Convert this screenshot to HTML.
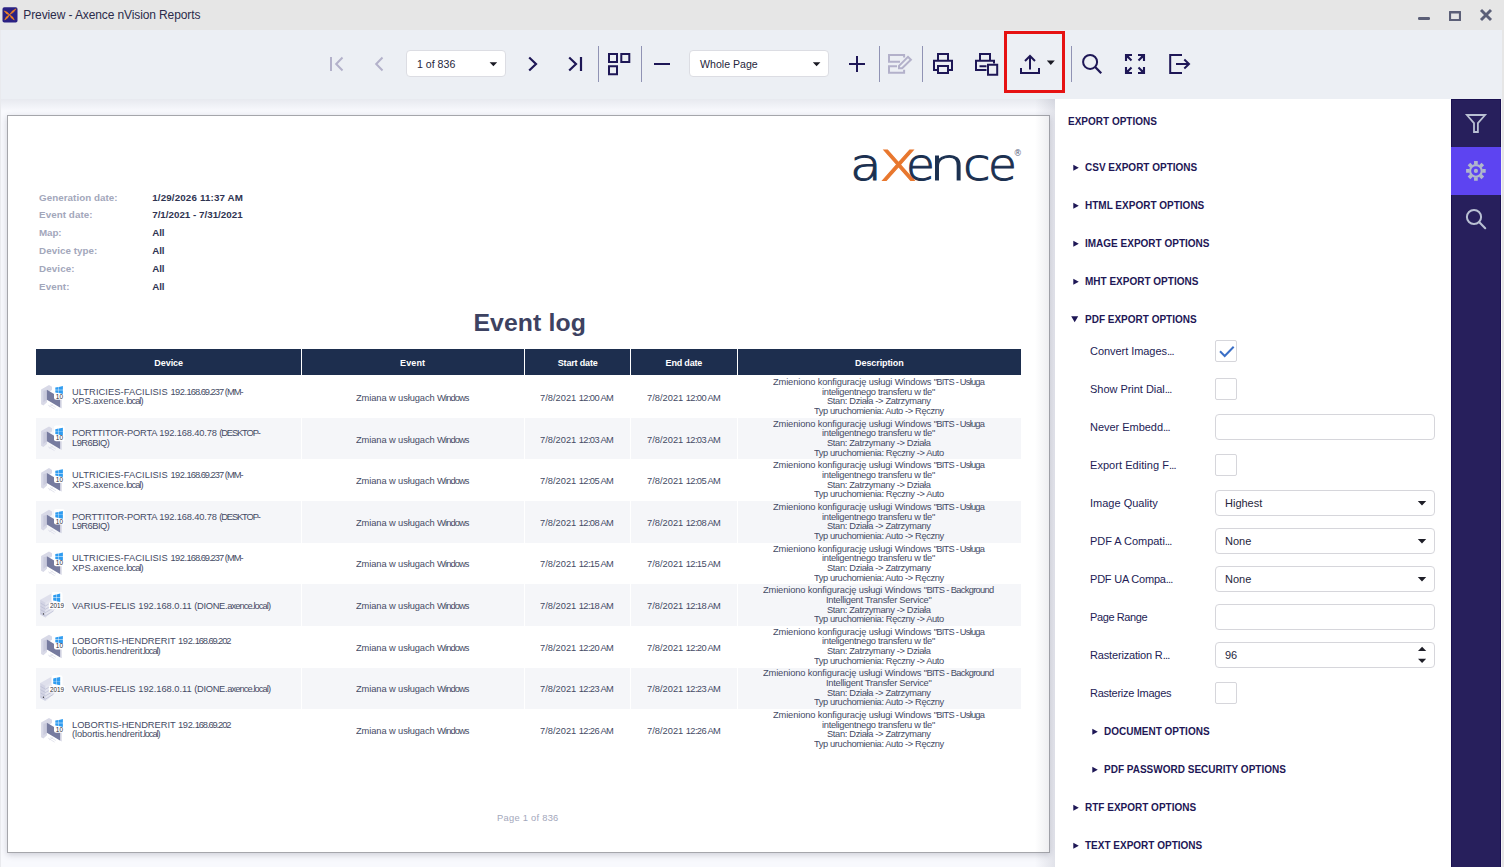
<!DOCTYPE html>
<html lang="en">
<head>
<meta charset="utf-8">
<title>Preview - Axence nVision Reports</title>
<style>
*{box-sizing:border-box;margin:0;padding:0}
html,body{width:1504px;height:867px;overflow:hidden}
body{position:relative;background:#e6e6e6;font-family:"Liberation Sans",sans-serif;color:#1e1756}
.abs{position:absolute}
#titlebar{position:absolute;left:0;top:0;width:1504px;height:30px;background:#e6e6e6}
#title{position:absolute;left:23.300px;top:7.500px;font-size:12px;line-height:15px;color:#2b2b4a;white-space:nowrap;letter-spacing:-0.110px}
#toolbar{position:absolute;left:1px;top:30px;width:1501px;height:69px;background:#eceff4}
#preview{position:absolute;left:1px;top:99px;width:1054px;height:768px;background:#f8f9fd;overflow:hidden}
#tbshadow{position:absolute;left:0;top:0;width:100%;height:12px;background:linear-gradient(#e7e9ef,#f8f9fd)}
#page{position:absolute;left:6px;top:16px;width:1043px;height:738px;background:#fff;border:1px solid #a5a6ab;box-shadow:0 2px 6px rgba(60,60,80,.22)}
#rpshadow{position:absolute;left:1034px;top:0;width:20px;height:768px;background:linear-gradient(90deg,rgba(110,112,135,0),rgba(110,112,135,.17))}
#rpanel{position:absolute;left:1055px;top:99px;width:396px;height:768px;background:#fff}
#sidebar{position:absolute;left:1451px;top:99px;width:50px;height:768px;background:#271f5c;border-left:1px solid #1a1050;border-right:1px solid #1a1050;border-top:1px solid #1a1050}
#sidebar .act{position:absolute;left:-1px;top:47px;width:50px;height:48px;background:#5d44f1}
.combo{position:absolute;background:#fff;border:1px solid #dcdde3;border-radius:4px;font-size:10.6px;color:#26263c;white-space:nowrap}
.sep{position:absolute;top:16px;width:1px;height:36px;background:#9093b4}
.tri{position:absolute;width:0;height:0;border-style:solid}

.sec{position:absolute;font-weight:bold;font-size:10px;line-height:12px;white-space:nowrap;color:#1e1756}
.lbl{position:absolute;left:35px;font-size:11px;line-height:14px;white-space:nowrap;color:#231c55}
.inp{position:absolute;left:160px;width:220px;height:26px;border:1px solid #d6d6db;border-radius:4px;background:#fff;font-size:11px;line-height:25px;padding-left:9px;color:#26263c}
.chk{position:absolute;left:160px;width:22px;height:22px;border:1px solid #d6d6db;border-radius:2px;background:#fff}

#page .t{position:absolute;white-space:nowrap;font-size:9.8px;line-height:12px;color:#454b65}
#page .ml{position:absolute;left:31px;white-space:nowrap;font-size:9.8px;line-height:12px;font-weight:bold;color:#a3a7bb}
#page .mv{position:absolute;left:144px;white-space:nowrap;font-size:9.8px;line-height:12px;font-weight:bold;color:#2f3452}
#page .th{position:absolute;top:233px;height:26px;background:#1d2e4e;color:#fff;font-weight:bold;font-size:9.8px;line-height:27.600px;text-align:center;white-space:nowrap}
#page .alt{position:absolute;left:28px;width:985px;background:#f5f6f9}
#page .vs{position:absolute;top:260px;width:1px;height:377px;background:#fff}
</style>
</head>
<body>
<div id="titlebar">
  <svg class="abs" style="left:2px;top:7px" width="16" height="16" viewBox="0 0 16 16"><rect x="0.5" y="0.2" width="15" height="15.4" rx="1.8" fill="#2a2183"/><path d="M7.47 7.77Q5.84 4.46 2.20 3.90Q3.83 7.21 7.47 7.77ZM7.47 7.77Q11.92 6.05 14.10 1.80Q9.65 3.52 7.47 7.77ZM7.47 7.77Q3.83 9.24 2.70 13.00Q6.34 11.53 7.47 7.77ZM7.47 7.77Q8.64 11.54 12.30 13.00Q11.13 9.23 7.47 7.77Z" fill="#f5841f" stroke="#f5841f" stroke-width="0.5" stroke-linejoin="round"/></svg>
  <div id="title">Preview - Axence nVision Reports</div>
  <svg class="abs" style="left:1414px;top:6px" width="84" height="18" viewBox="0 0 84 18">
    <rect x="4" y="11" width="12" height="3" rx="1.3" fill="#5b5f77"/>
    <path d="M35.500 4.900h11q.5 0 .5.500v9.200q0 .5-.5.500h-11q-.5 0-.5-.5v-9.200q0-.5.500-.5zM37.100 7.600v5.400h7.800v-5.400z" fill="#5b5f77" fill-rule="evenodd"/>
    <path d="M67 4l10 10M77 4l-10 10" stroke="#5b5f77" stroke-width="2.900" stroke-linecap="butt"/>
  </svg>
</div>

<div class="abs" style="left:0;top:30px;width:1px;height:837px;background:#e9eaee"></div>
<div id="toolbar">
  <div class="sep" style="left:597px"></div>
  <div class="sep" style="left:640px"></div>
  <div class="sep" style="left:878px"></div>
  <div class="sep" style="left:921px"></div>
  <div class="sep" style="left:1070px"></div>
  <div class="combo" style="left:405px;top:20px;width:100px;height:27px;line-height:27px;padding-left:10px">1 of 836</div>
  <div class="combo" style="left:688px;top:20px;width:140px;height:27px;line-height:27px;padding-left:10px">Whole Page</div>
  <div class="abs" style="left:1003.4px;top:1.4px;width:61px;height:62.100px;border:3.200px solid #e61212"></div>
</div>
<svg class="abs" style="left:0;top:0" width="1504" height="99" viewBox="0 0 1504 99" fill="none" stroke="#1e1756" stroke-width="2">
  <g fill="#1a1a24" stroke="none"><path d="M489.600 62.200h7.600l-3.800 4zM812.800 62.200h7.600l-3.800 4zM1046.800 60.600h8l-4 4.300z"/></g>
  <!-- first / prev (disabled) -->
  <g stroke="#b3b1ca">
    <path d="M331 57v14M342.5 57.5L336.2 64l6.3 6.5"/>
    <path d="M382.5 57.5L376.2 64l6.3 6.5"/>
  </g>
  <!-- next / last -->
  <path d="M529.2 57.5L536 64l-6.800 6.500" stroke-width="2.200"/>
  <path d="M569.200 57.500L576 64l-6.800 6.500M581 57v14" stroke-width="2.200"/>
  <!-- thumbnails grid -->
  <path d="M609 54h8v8h-8zM621.300 54h8v8h-8zM609 66.300h8v8h-8z"/>
  <!-- minus / plus -->
  <path d="M654 64h16M849 64h16M857 56v16"/>
  <!-- edit (disabled) -->
  <g stroke="#b3b1ca">
    <path d="M904.100 57.500v-2.600h-15.100v6.800h11M904.100 69.700v3h-15.100v-6.400h8"/>
    <path d="M899 68.300v-2.400l9-9 2.900 2.900-8.800 8.500z" stroke-width="2"/>
  </g>
  <!-- print -->
  <path d="M938 60.500v-6.500h10v6.500M938 70h-4v-9.200h18v9.200h-4M938 66h10v7h-10z"/>
  <!-- print page -->
  <path d="M980 60.500v-6.500h10v6.500M986.500 70h-10.500v-9.200h18v2.800M979.500 66.200h7"/>
  <path d="M988 64.800h9.200v9.900h-9.200z"/>
  <!-- export -->
  <path d="M1021 68v5h18v-5M1030 69.500v-13M1025 61l5-5 5 5"/>
  <!-- search -->
  <circle cx="1090.100" cy="61.900" r="7"/>
  <path d="M1095.200 67l6 6.200" stroke-width="2.300"/>
  <!-- fullscreen -->
  <g stroke-width="2.100">
  <path d="M1126 61v-6h6M1126.500 55.500l5 5" />
  <path d="M1144 61v-6h-6M1143.500 55.500l-5 5"/>
  <path d="M1126 67v6h6M1126.500 72.500l5-5"/>
  <path d="M1144 67v6h-6M1143.500 72.500l-5-5"/>
  </g>
  <g stroke="none" fill="#1e1756"><path d="M1126 55h4.500l-4.500 4.500zM1144 55h-4.500l4.500 4.500zM1126 73h4.500l-4.500-4.500zM1144 73h-4.500l4.500-4.500z"/></g>
  <!-- exit -->
  <path d="M1182 55h-11.800v18h11.800M1176 64h12.800M1184.300 59.500l4.700 4.500-4.700 4.500"/>
</svg>

<div id="preview">
  <div id="tbshadow"></div>
  <div id="page">
<!--PAGE-->
<div id="logo" style="font-family:'DejaVu Sans',sans-serif;font-weight:200"><span style="position:absolute;left:841.6px;top:18.8px;font-size:44px;line-height:60px;color:#1b3050;-webkit-text-stroke:1.0px #1b3050;transform:scaleX(1.176);transform-origin:0 0">a</span><span style="position:absolute;left:870.7px;top:15.1px;font-size:54.5px;line-height:60px;color:#e8772e;-webkit-text-stroke:1.0px #e8772e;transform:scaleX(1.207);transform-origin:0 0">x</span><span style="position:absolute;left:897.9px;top:18.8px;font-size:44px;line-height:60px;color:#1b3050;-webkit-text-stroke:1.0px #1b3050;transform:scaleX(1.066);transform-origin:0 0">e</span><span style="position:absolute;left:920.9px;top:18.8px;font-size:44px;line-height:60px;color:#1b3050;-webkit-text-stroke:1.0px #1b3050;transform:scaleX(1.337);transform-origin:0 0">n</span><span style="position:absolute;left:954.8px;top:18.8px;font-size:44px;line-height:60px;color:#1b3050;-webkit-text-stroke:1.0px #1b3050;transform:scaleX(1.138);transform-origin:0 0">c</span><span style="position:absolute;left:980.4px;top:18.8px;font-size:44px;line-height:60px;color:#1b3050;-webkit-text-stroke:1.0px #1b3050;transform:scaleX(1.066);transform-origin:0 0">e</span><span style="position:absolute;left:1005.6px;top:31.5px;font-size:8.5px;line-height:11px;font-weight:400;color:#55657f">®</span></div>
<div class="ml" style="left:31.1px;top:76px"><span style="letter-spacing:0.04px">Generation date:</span></div>
<div class="mv" style="left:144.2px;top:76px"><span style="letter-spacing:0.14px">1/29/2026 11:37 AM</span></div>
<div class="ml" style="left:31.1px;top:93px"><span style="letter-spacing:0.06px">Event date:</span></div>
<div class="mv" style="left:144.2px;top:93px"><span style="letter-spacing:0.00px">7/1/2021 - 7/31/2021</span></div>
<div class="ml" style="left:31.1px;top:111px"><span style="letter-spacing:-0.14px">Map:</span></div>
<div class="mv" style="left:144.2px;top:111px"><span style="letter-spacing:-0.07px">All</span></div>
<div class="ml" style="left:31.1px;top:129px"><span style="letter-spacing:0.05px">Device type:</span></div>
<div class="mv" style="left:144.2px;top:129px"><span style="letter-spacing:-0.07px">All</span></div>
<div class="ml" style="left:31.1px;top:147px"><span style="letter-spacing:0.09px">Device:</span></div>
<div class="mv" style="left:144.2px;top:147px"><span style="letter-spacing:-0.07px">All</span></div>
<div class="ml" style="left:31.1px;top:165px"><span style="letter-spacing:0.09px">Event:</span></div>
<div class="mv" style="left:144.2px;top:165px"><span style="letter-spacing:-0.07px">All</span></div>
<div class="abs" style="left:465.4px;top:191.6px;font-size:24.8px;line-height:30px;font-weight:bold;color:#3d4261;white-space:nowrap;letter-spacing:0.1px">Event log</div>
<div class="th" style="left:28px;width:265px"><span style="display:inline-block;transform:scaleX(.92);letter-spacing:-0.05px;margin-right:0.05px">Device</span></div>
<div class="th" style="left:294px;width:222px"><span style="display:inline-block;transform:scaleX(.92);letter-spacing:0.10px;margin-right:-0.10px">Event</span></div>
<div class="th" style="left:517px;width:105px"><span style="display:inline-block;transform:scaleX(.92);letter-spacing:-0.19px;margin-right:0.19px">Start date</span></div>
<div class="th" style="left:623px;width:106px"><span style="display:inline-block;transform:scaleX(.92);letter-spacing:-0.21px;margin-right:0.21px">End date</span></div>
<div class="th" style="left:730px;width:283px"><span style="display:inline-block;transform:scaleX(.92);letter-spacing:-0.11px;margin-right:0.11px">Description</span></div>
<div class="alt" style="top:301.9px;height:41.6px"></div>
<div class="alt" style="top:385.2px;height:41.6px"></div>
<div class="alt" style="top:468.4px;height:41.6px"></div>
<div class="alt" style="top:551.7px;height:41.6px"></div>
<div class="vs" style="left:293px"></div>
<div class="vs" style="left:516px"></div>
<div class="vs" style="left:622px"></div>
<div class="vs" style="left:729px"></div>
<div class="t" style="left:64.2px;top:270px;transform:scaleX(0.95);transform-origin:0 0"><span style="letter-spacing:0.07px">ULTRICIES-FACILISIS </span><span style="letter-spacing:-0.51px">192.</span><span style="letter-spacing:-1.06px">168.69.237 </span><span style="letter-spacing:-0.95px">(MM-</span></div>
<div class="t" style="left:64.2px;top:279px;transform:scaleX(0.95);transform-origin:0 0"><span style="letter-spacing:0.04px">XPS.axence.</span><span style="letter-spacing:-1.04px">local)</span></div>
<div class="t" style="left:348.0px;top:276px;transform:scaleX(0.95);transform-origin:0 0"><span style="letter-spacing:-0.10px">Zmiana w usługach </span><span style="letter-spacing:-0.94px">Windows</span></div>
<div class="t" style="left:532.0px;top:276px;transform:scaleX(0.95);transform-origin:0 0"><span style="letter-spacing:-0.00px">7/8/2021 </span><span style="letter-spacing:-0.66px">12:00 AM</span></div>
<div class="t" style="left:639.2px;top:276px;transform:scaleX(0.95);transform-origin:0 0"><span style="letter-spacing:-0.00px">7/8/2021 </span><span style="letter-spacing:-0.66px">12:00 AM</span></div>
<div class="t" style="left:765.2px;top:260px;transform:scaleX(0.95);transform-origin:0 0"><span style="letter-spacing:-0.14px">Zmieniono konfigurację usługi </span><span style="letter-spacing:-0.17px">Windows </span><span style="letter-spacing:-0.82px">&quot;BITS - Usługa</span></div>
<div class="t" style="left:814.2px;top:270px;transform:scaleX(0.95);transform-origin:0 0"><span style="letter-spacing:-0.32px">inteligentnego transferu w tle&quot;</span></div>
<div class="t" style="left:818.9px;top:279px;transform:scaleX(0.95);transform-origin:0 0"><span style="letter-spacing:-0.36px">Stan: Działa -&gt; Zatrzymany</span></div>
<div class="t" style="left:805.7px;top:289px;transform:scaleX(0.95);transform-origin:0 0"><span style="letter-spacing:-0.40px">Typ uruchomienia: Auto -&gt; Ręczny</span></div>
<div class="t" style="left:64.2px;top:311px;transform:scaleX(0.95);transform-origin:0 0"><span style="letter-spacing:-0.17px">PORTTITOR-PORTA </span><span style="letter-spacing:-0.16px">192.168.40.78 </span><span style="letter-spacing:-1.17px">(DESKTOP-</span></div>
<div class="t" style="left:64.2px;top:321px;transform:scaleX(0.95);transform-origin:0 0"><span style="letter-spacing:-0.54px">L9R6BIQ)</span></div>
<div class="t" style="left:348.0px;top:318px;transform:scaleX(0.95);transform-origin:0 0"><span style="letter-spacing:-0.10px">Zmiana w usługach </span><span style="letter-spacing:-0.94px">Windows</span></div>
<div class="t" style="left:532.0px;top:318px;transform:scaleX(0.95);transform-origin:0 0"><span style="letter-spacing:-0.00px">7/8/2021 </span><span style="letter-spacing:-0.66px">12:03 AM</span></div>
<div class="t" style="left:639.2px;top:318px;transform:scaleX(0.95);transform-origin:0 0"><span style="letter-spacing:-0.00px">7/8/2021 </span><span style="letter-spacing:-0.66px">12:03 AM</span></div>
<div class="t" style="left:765.2px;top:302px;transform:scaleX(0.95);transform-origin:0 0"><span style="letter-spacing:-0.14px">Zmieniono konfigurację usługi </span><span style="letter-spacing:-0.17px">Windows </span><span style="letter-spacing:-0.82px">&quot;BITS - Usługa</span></div>
<div class="t" style="left:814.2px;top:311px;transform:scaleX(0.95);transform-origin:0 0"><span style="letter-spacing:-0.32px">inteligentnego transferu w tle&quot;</span></div>
<div class="t" style="left:818.9px;top:321px;transform:scaleX(0.95);transform-origin:0 0"><span style="letter-spacing:-0.36px">Stan: Zatrzymany -&gt; Działa</span></div>
<div class="t" style="left:805.7px;top:331px;transform:scaleX(0.95);transform-origin:0 0"><span style="letter-spacing:-0.40px">Typ uruchomienia: Ręczny -&gt; Auto</span></div>
<div class="t" style="left:64.2px;top:353px;transform:scaleX(0.95);transform-origin:0 0"><span style="letter-spacing:0.07px">ULTRICIES-FACILISIS </span><span style="letter-spacing:-0.51px">192.</span><span style="letter-spacing:-1.06px">168.69.237 </span><span style="letter-spacing:-0.95px">(MM-</span></div>
<div class="t" style="left:64.2px;top:363px;transform:scaleX(0.95);transform-origin:0 0"><span style="letter-spacing:0.04px">XPS.axence.</span><span style="letter-spacing:-1.04px">local)</span></div>
<div class="t" style="left:348.0px;top:359px;transform:scaleX(0.95);transform-origin:0 0"><span style="letter-spacing:-0.10px">Zmiana w usługach </span><span style="letter-spacing:-0.94px">Windows</span></div>
<div class="t" style="left:532.0px;top:359px;transform:scaleX(0.95);transform-origin:0 0"><span style="letter-spacing:-0.00px">7/8/2021 </span><span style="letter-spacing:-0.66px">12:05 AM</span></div>
<div class="t" style="left:639.2px;top:359px;transform:scaleX(0.95);transform-origin:0 0"><span style="letter-spacing:-0.00px">7/8/2021 </span><span style="letter-spacing:-0.66px">12:05 AM</span></div>
<div class="t" style="left:765.2px;top:343px;transform:scaleX(0.95);transform-origin:0 0"><span style="letter-spacing:-0.14px">Zmieniono konfigurację usługi </span><span style="letter-spacing:-0.17px">Windows </span><span style="letter-spacing:-0.82px">&quot;BITS - Usługa</span></div>
<div class="t" style="left:814.2px;top:353px;transform:scaleX(0.95);transform-origin:0 0"><span style="letter-spacing:-0.32px">inteligentnego transferu w tle&quot;</span></div>
<div class="t" style="left:818.9px;top:363px;transform:scaleX(0.95);transform-origin:0 0"><span style="letter-spacing:-0.36px">Stan: Zatrzymany -&gt; Działa</span></div>
<div class="t" style="left:805.7px;top:372px;transform:scaleX(0.95);transform-origin:0 0"><span style="letter-spacing:-0.40px">Typ uruchomienia: Ręczny -&gt; Auto</span></div>
<div class="t" style="left:64.2px;top:395px;transform:scaleX(0.95);transform-origin:0 0"><span style="letter-spacing:-0.17px">PORTTITOR-PORTA </span><span style="letter-spacing:-0.16px">192.168.40.78 </span><span style="letter-spacing:-1.17px">(DESKTOP-</span></div>
<div class="t" style="left:64.2px;top:404px;transform:scaleX(0.95);transform-origin:0 0"><span style="letter-spacing:-0.54px">L9R6BIQ)</span></div>
<div class="t" style="left:348.0px;top:401px;transform:scaleX(0.95);transform-origin:0 0"><span style="letter-spacing:-0.10px">Zmiana w usługach </span><span style="letter-spacing:-0.94px">Windows</span></div>
<div class="t" style="left:532.0px;top:401px;transform:scaleX(0.95);transform-origin:0 0"><span style="letter-spacing:-0.00px">7/8/2021 </span><span style="letter-spacing:-0.66px">12:08 AM</span></div>
<div class="t" style="left:639.2px;top:401px;transform:scaleX(0.95);transform-origin:0 0"><span style="letter-spacing:-0.00px">7/8/2021 </span><span style="letter-spacing:-0.66px">12:08 AM</span></div>
<div class="t" style="left:765.2px;top:385px;transform:scaleX(0.95);transform-origin:0 0"><span style="letter-spacing:-0.14px">Zmieniono konfigurację usługi </span><span style="letter-spacing:-0.17px">Windows </span><span style="letter-spacing:-0.82px">&quot;BITS - Usługa</span></div>
<div class="t" style="left:814.2px;top:395px;transform:scaleX(0.95);transform-origin:0 0"><span style="letter-spacing:-0.32px">inteligentnego transferu w tle&quot;</span></div>
<div class="t" style="left:818.9px;top:404px;transform:scaleX(0.95);transform-origin:0 0"><span style="letter-spacing:-0.36px">Stan: Działa -&gt; Zatrzymany</span></div>
<div class="t" style="left:805.7px;top:414px;transform:scaleX(0.95);transform-origin:0 0"><span style="letter-spacing:-0.40px">Typ uruchomienia: Auto -&gt; Ręczny</span></div>
<div class="t" style="left:64.2px;top:436px;transform:scaleX(0.95);transform-origin:0 0"><span style="letter-spacing:0.07px">ULTRICIES-FACILISIS </span><span style="letter-spacing:-0.51px">192.</span><span style="letter-spacing:-1.06px">168.69.237 </span><span style="letter-spacing:-0.95px">(MM-</span></div>
<div class="t" style="left:64.2px;top:446px;transform:scaleX(0.95);transform-origin:0 0"><span style="letter-spacing:0.04px">XPS.axence.</span><span style="letter-spacing:-1.04px">local)</span></div>
<div class="t" style="left:348.0px;top:442px;transform:scaleX(0.95);transform-origin:0 0"><span style="letter-spacing:-0.10px">Zmiana w usługach </span><span style="letter-spacing:-0.94px">Windows</span></div>
<div class="t" style="left:532.0px;top:442px;transform:scaleX(0.95);transform-origin:0 0"><span style="letter-spacing:-0.00px">7/8/2021 </span><span style="letter-spacing:-0.66px">12:15 AM</span></div>
<div class="t" style="left:639.2px;top:442px;transform:scaleX(0.95);transform-origin:0 0"><span style="letter-spacing:-0.00px">7/8/2021 </span><span style="letter-spacing:-0.66px">12:15 AM</span></div>
<div class="t" style="left:765.2px;top:427px;transform:scaleX(0.95);transform-origin:0 0"><span style="letter-spacing:-0.14px">Zmieniono konfigurację usługi </span><span style="letter-spacing:-0.17px">Windows </span><span style="letter-spacing:-0.82px">&quot;BITS - Usługa</span></div>
<div class="t" style="left:814.2px;top:436px;transform:scaleX(0.95);transform-origin:0 0"><span style="letter-spacing:-0.32px">inteligentnego transferu w tle&quot;</span></div>
<div class="t" style="left:818.9px;top:446px;transform:scaleX(0.95);transform-origin:0 0"><span style="letter-spacing:-0.36px">Stan: Działa -&gt; Zatrzymany</span></div>
<div class="t" style="left:805.7px;top:456px;transform:scaleX(0.95);transform-origin:0 0"><span style="letter-spacing:-0.40px">Typ uruchomienia: Auto -&gt; Ręczny</span></div>
<div class="t" style="left:64.2px;top:484px;transform:scaleX(0.95);transform-origin:0 0"><span style="letter-spacing:0.06px">VARIUS-FELIS </span><span style="letter-spacing:-0.03px">192.168.0.11 </span><span style="letter-spacing:-0.30px">(DIONE.</span><span style="letter-spacing:-0.97px">axence.local)</span></div>
<div class="t" style="left:348.0px;top:484px;transform:scaleX(0.95);transform-origin:0 0"><span style="letter-spacing:-0.10px">Zmiana w usługach </span><span style="letter-spacing:-0.94px">Windows</span></div>
<div class="t" style="left:532.0px;top:484px;transform:scaleX(0.95);transform-origin:0 0"><span style="letter-spacing:-0.00px">7/8/2021 </span><span style="letter-spacing:-0.66px">12:18 AM</span></div>
<div class="t" style="left:639.2px;top:484px;transform:scaleX(0.95);transform-origin:0 0"><span style="letter-spacing:-0.00px">7/8/2021 </span><span style="letter-spacing:-0.66px">12:18 AM</span></div>
<div class="t" style="left:755.4px;top:468px;transform:scaleX(0.95);transform-origin:0 0"><span style="letter-spacing:-0.14px">Zmieniono konfigurację usługi </span><span style="letter-spacing:-0.17px">Windows </span><span style="letter-spacing:-0.71px">&quot;BITS - Background</span></div>
<div class="t" style="left:818.0px;top:478px;transform:scaleX(0.95);transform-origin:0 0"><span style="letter-spacing:-0.29px">Intelligent Transfer Service&quot;</span></div>
<div class="t" style="left:818.9px;top:488px;transform:scaleX(0.95);transform-origin:0 0"><span style="letter-spacing:-0.36px">Stan: Zatrzymany -&gt; Działa</span></div>
<div class="t" style="left:805.7px;top:497px;transform:scaleX(0.95);transform-origin:0 0"><span style="letter-spacing:-0.40px">Typ uruchomienia: Ręczny -&gt; Auto</span></div>
<div class="t" style="left:64.2px;top:519px;transform:scaleX(0.95);transform-origin:0 0"><span style="letter-spacing:-0.04px">LOBORTIS-HENDRERIT </span><span style="letter-spacing:-0.37px">192.</span><span style="letter-spacing:-1.15px">168.69.202</span></div>
<div class="t" style="left:64.2px;top:529px;transform:scaleX(0.95);transform-origin:0 0"><span style="letter-spacing:-0.12px">(lobortis.</span><span style="letter-spacing:-0.13px">hendrerit</span><span style="letter-spacing:-1.12px">.local)</span></div>
<div class="t" style="left:348.0px;top:526px;transform:scaleX(0.95);transform-origin:0 0"><span style="letter-spacing:-0.10px">Zmiana w usługach </span><span style="letter-spacing:-0.94px">Windows</span></div>
<div class="t" style="left:532.0px;top:526px;transform:scaleX(0.95);transform-origin:0 0"><span style="letter-spacing:-0.00px">7/8/2021 </span><span style="letter-spacing:-0.66px">12:20 AM</span></div>
<div class="t" style="left:639.2px;top:526px;transform:scaleX(0.95);transform-origin:0 0"><span style="letter-spacing:-0.00px">7/8/2021 </span><span style="letter-spacing:-0.66px">12:20 AM</span></div>
<div class="t" style="left:765.2px;top:510px;transform:scaleX(0.95);transform-origin:0 0"><span style="letter-spacing:-0.14px">Zmieniono konfigurację usługi </span><span style="letter-spacing:-0.17px">Windows </span><span style="letter-spacing:-0.82px">&quot;BITS - Usługa</span></div>
<div class="t" style="left:814.2px;top:519px;transform:scaleX(0.95);transform-origin:0 0"><span style="letter-spacing:-0.32px">inteligentnego transferu w tle&quot;</span></div>
<div class="t" style="left:818.9px;top:529px;transform:scaleX(0.95);transform-origin:0 0"><span style="letter-spacing:-0.36px">Stan: Zatrzymany -&gt; Działa</span></div>
<div class="t" style="left:805.7px;top:539px;transform:scaleX(0.95);transform-origin:0 0"><span style="letter-spacing:-0.40px">Typ uruchomienia: Ręczny -&gt; Auto</span></div>
<div class="t" style="left:64.2px;top:567px;transform:scaleX(0.95);transform-origin:0 0"><span style="letter-spacing:0.06px">VARIUS-FELIS </span><span style="letter-spacing:-0.03px">192.168.0.11 </span><span style="letter-spacing:-0.30px">(DIONE.</span><span style="letter-spacing:-0.97px">axence.local)</span></div>
<div class="t" style="left:348.0px;top:567px;transform:scaleX(0.95);transform-origin:0 0"><span style="letter-spacing:-0.10px">Zmiana w usługach </span><span style="letter-spacing:-0.94px">Windows</span></div>
<div class="t" style="left:532.0px;top:567px;transform:scaleX(0.95);transform-origin:0 0"><span style="letter-spacing:-0.00px">7/8/2021 </span><span style="letter-spacing:-0.66px">12:23 AM</span></div>
<div class="t" style="left:639.2px;top:567px;transform:scaleX(0.95);transform-origin:0 0"><span style="letter-spacing:-0.00px">7/8/2021 </span><span style="letter-spacing:-0.66px">12:23 AM</span></div>
<div class="t" style="left:755.4px;top:551px;transform:scaleX(0.95);transform-origin:0 0"><span style="letter-spacing:-0.14px">Zmieniono konfigurację usługi </span><span style="letter-spacing:-0.17px">Windows </span><span style="letter-spacing:-0.71px">&quot;BITS - Background</span></div>
<div class="t" style="left:818.0px;top:561px;transform:scaleX(0.95);transform-origin:0 0"><span style="letter-spacing:-0.29px">Intelligent Transfer Service&quot;</span></div>
<div class="t" style="left:818.9px;top:571px;transform:scaleX(0.95);transform-origin:0 0"><span style="letter-spacing:-0.36px">Stan: Działa -&gt; Zatrzymany</span></div>
<div class="t" style="left:805.7px;top:580px;transform:scaleX(0.95);transform-origin:0 0"><span style="letter-spacing:-0.40px">Typ uruchomienia: Auto -&gt; Ręczny</span></div>
<div class="t" style="left:64.2px;top:603px;transform:scaleX(0.95);transform-origin:0 0"><span style="letter-spacing:-0.04px">LOBORTIS-HENDRERIT </span><span style="letter-spacing:-0.37px">192.</span><span style="letter-spacing:-1.15px">168.69.202</span></div>
<div class="t" style="left:64.2px;top:612px;transform:scaleX(0.95);transform-origin:0 0"><span style="letter-spacing:-0.12px">(lobortis.</span><span style="letter-spacing:-0.13px">hendrerit</span><span style="letter-spacing:-1.12px">.local)</span></div>
<div class="t" style="left:348.0px;top:609px;transform:scaleX(0.95);transform-origin:0 0"><span style="letter-spacing:-0.10px">Zmiana w usługach </span><span style="letter-spacing:-0.94px">Windows</span></div>
<div class="t" style="left:532.0px;top:609px;transform:scaleX(0.95);transform-origin:0 0"><span style="letter-spacing:-0.00px">7/8/2021 </span><span style="letter-spacing:-0.66px">12:26 AM</span></div>
<div class="t" style="left:639.2px;top:609px;transform:scaleX(0.95);transform-origin:0 0"><span style="letter-spacing:-0.00px">7/8/2021 </span><span style="letter-spacing:-0.66px">12:26 AM</span></div>
<div class="t" style="left:765.2px;top:593px;transform:scaleX(0.95);transform-origin:0 0"><span style="letter-spacing:-0.14px">Zmieniono konfigurację usługi </span><span style="letter-spacing:-0.17px">Windows </span><span style="letter-spacing:-0.82px">&quot;BITS - Usługa</span></div>
<div class="t" style="left:814.2px;top:603px;transform:scaleX(0.95);transform-origin:0 0"><span style="letter-spacing:-0.32px">inteligentnego transferu w tle&quot;</span></div>
<div class="t" style="left:818.9px;top:612px;transform:scaleX(0.95);transform-origin:0 0"><span style="letter-spacing:-0.36px">Stan: Działa -&gt; Zatrzymany</span></div>
<div class="t" style="left:805.7px;top:622px;transform:scaleX(0.95);transform-origin:0 0"><span style="letter-spacing:-0.40px">Typ uruchomienia: Auto -&gt; Ręczny</span></div>
<div class="t" style="left:488.8px;top:696px;color:#a3a7bb;transform:scaleX(0.95);transform-origin:0 0"><span style="letter-spacing:0.29px">Page 1 of 836</span></div>
<svg class="abs" style="left:0;top:0" width="100" height="736" viewBox="0 0 100 736"><g transform="translate(28 262.0)"><path d="M5.100 11.500L13 6.900l3 1.800v3.300l-5 3v9.300l-3.600 3.200-2.300-1.300z" fill="#d8d9e7"/>
<path d="M7.400 12.800v11.500l3.500-2.600v-9.700z" fill="#c9cadc"/>
<path d="M10.900 11.800L24 19.600v9.900L10.900 21.700z" fill="#767b9f"/>
<path d="M24 19.700l1.600.9v9.800l-1.600-.9z" fill="#cfd0e0"/>
<path d="M12.200 27.200l6.400 3.900M14.200 26.100l5.600 3.400M13.300 28.800l3.600-2.200" stroke="#dddeea" stroke-width="0.800" fill="none"/>
<rect x="18" y="6" width="10.600" height="15.700" rx="2" fill="#fff"/>
<path d="M19.300 9.600l3.200-.6v2.800h-3.200zM22.900 8.900l4-.8v3.700h-4zM19.300 12.200h3.200v2.800l-3.200-.6zM22.900 12.200h4v3.700l-4-.8z" fill="#2f9cf0"/>
<text x="23.400" y="20.700" style="font-family:'Liberation Sans',sans-serif" font-size="6.400" text-anchor="middle" fill="#2a2a33">10</text></g><g transform="translate(28 303.6)"><path d="M5.100 11.500L13 6.900l3 1.800v3.300l-5 3v9.300l-3.600 3.200-2.300-1.300z" fill="#d8d9e7"/>
<path d="M7.400 12.800v11.500l3.500-2.600v-9.700z" fill="#c9cadc"/>
<path d="M10.900 11.800L24 19.600v9.900L10.900 21.700z" fill="#767b9f"/>
<path d="M24 19.700l1.600.9v9.800l-1.600-.9z" fill="#cfd0e0"/>
<path d="M12.200 27.200l6.400 3.900M14.200 26.100l5.600 3.400M13.300 28.800l3.600-2.200" stroke="#dddeea" stroke-width="0.800" fill="none"/>
<rect x="18" y="6" width="10.600" height="15.700" rx="2" fill="#fff"/>
<path d="M19.300 9.600l3.200-.6v2.800h-3.200zM22.900 8.900l4-.8v3.700h-4zM19.300 12.200h3.200v2.800l-3.200-.6zM22.900 12.200h4v3.700l-4-.8z" fill="#2f9cf0"/>
<text x="23.400" y="20.700" style="font-family:'Liberation Sans',sans-serif" font-size="6.400" text-anchor="middle" fill="#2a2a33">10</text></g><g transform="translate(28 345.2)"><path d="M5.100 11.500L13 6.900l3 1.800v3.300l-5 3v9.300l-3.600 3.200-2.300-1.300z" fill="#d8d9e7"/>
<path d="M7.400 12.800v11.500l3.500-2.600v-9.700z" fill="#c9cadc"/>
<path d="M10.900 11.800L24 19.600v9.900L10.900 21.700z" fill="#767b9f"/>
<path d="M24 19.700l1.600.9v9.800l-1.600-.9z" fill="#cfd0e0"/>
<path d="M12.200 27.200l6.400 3.900M14.200 26.100l5.600 3.400M13.300 28.800l3.600-2.200" stroke="#dddeea" stroke-width="0.800" fill="none"/>
<rect x="18" y="6" width="10.600" height="15.700" rx="2" fill="#fff"/>
<path d="M19.300 9.600l3.200-.6v2.800h-3.200zM22.900 8.900l4-.8v3.700h-4zM19.300 12.200h3.200v2.800l-3.200-.6zM22.900 12.200h4v3.700l-4-.8z" fill="#2f9cf0"/>
<text x="23.400" y="20.700" style="font-family:'Liberation Sans',sans-serif" font-size="6.400" text-anchor="middle" fill="#2a2a33">10</text></g><g transform="translate(28 386.9)"><path d="M5.100 11.500L13 6.900l3 1.800v3.300l-5 3v9.300l-3.600 3.200-2.300-1.300z" fill="#d8d9e7"/>
<path d="M7.400 12.800v11.500l3.500-2.600v-9.700z" fill="#c9cadc"/>
<path d="M10.900 11.800L24 19.600v9.900L10.900 21.700z" fill="#767b9f"/>
<path d="M24 19.700l1.600.9v9.800l-1.600-.9z" fill="#cfd0e0"/>
<path d="M12.200 27.200l6.400 3.900M14.200 26.100l5.600 3.400M13.300 28.800l3.600-2.200" stroke="#dddeea" stroke-width="0.800" fill="none"/>
<rect x="18" y="6" width="10.600" height="15.700" rx="2" fill="#fff"/>
<path d="M19.300 9.600l3.200-.6v2.800h-3.200zM22.900 8.900l4-.8v3.700h-4zM19.300 12.200h3.200v2.800l-3.200-.6zM22.900 12.200h4v3.700l-4-.8z" fill="#2f9cf0"/>
<text x="23.400" y="20.700" style="font-family:'Liberation Sans',sans-serif" font-size="6.400" text-anchor="middle" fill="#2a2a33">10</text></g><g transform="translate(28 428.5)"><path d="M5.100 11.500L13 6.900l3 1.800v3.300l-5 3v9.300l-3.600 3.200-2.300-1.300z" fill="#d8d9e7"/>
<path d="M7.400 12.800v11.500l3.500-2.600v-9.700z" fill="#c9cadc"/>
<path d="M10.900 11.800L24 19.600v9.900L10.900 21.700z" fill="#767b9f"/>
<path d="M24 19.700l1.600.9v9.800l-1.600-.9z" fill="#cfd0e0"/>
<path d="M12.200 27.200l6.400 3.900M14.200 26.100l5.600 3.400M13.300 28.800l3.600-2.200" stroke="#dddeea" stroke-width="0.800" fill="none"/>
<rect x="18" y="6" width="10.600" height="15.700" rx="2" fill="#fff"/>
<path d="M19.300 9.600l3.200-.6v2.800h-3.200zM22.900 8.900l4-.8v3.700h-4zM19.300 12.200h3.200v2.800l-3.200-.6zM22.900 12.200h4v3.700l-4-.8z" fill="#2f9cf0"/>
<text x="23.400" y="20.700" style="font-family:'Liberation Sans',sans-serif" font-size="6.400" text-anchor="middle" fill="#2a2a33">10</text></g><g transform="translate(28 469.6)"><path d="M4.300 14.200L15.500 7.800l6 2.400v11.500L9.500 32l-5.200-3z" fill="#dfe0ec"/>
<path d="M4.300 14.200l5.200 3V32l-5.200-3z" fill="#d3d4e4"/>
<path d="M9.500 17.200l12-7V21.700L9.500 32z" fill="#e4e5ef"/>
<path d="M4.500 17.500l5 2.800 10-5.800M4.500 20.800l5 2.800 10-5.800M4.500 24.100l5 2.800 10-5.800M4.500 27.400l5 2.800 8-4.800" stroke="#b9bbd2" stroke-width="0.700" fill="none"/>
<circle cx="7.500" cy="28.300" r="0.600" fill="#222"/>
<rect x="15.500" y="6.300" width="11" height="11" rx="2" fill="#fff"/>
<rect x="12.800" y="16.700" width="16.300" height="6.900" rx="1.500" fill="#fff"/>
<path d="M17.200 9.600l3-.7v3.100h-3zM20.600 8.800l3.600-.8v4h-3.600zM17.200 12.400h3v3.100l-3-.6zM20.600 12.400h3.600v4l-3.600-.8z" fill="#2f9cf0"/>
<text x="21" y="22.700" style="font-family:'Liberation Sans',sans-serif" font-size="6.300" text-anchor="middle" fill="#2a2a33" textLength="14" lengthAdjust="spacingAndGlyphs">2019</text></g><g transform="translate(28 511.8)"><path d="M5.100 11.500L13 6.900l3 1.800v3.300l-5 3v9.300l-3.600 3.200-2.300-1.300z" fill="#d8d9e7"/>
<path d="M7.400 12.800v11.500l3.500-2.600v-9.700z" fill="#c9cadc"/>
<path d="M10.900 11.800L24 19.600v9.900L10.900 21.700z" fill="#767b9f"/>
<path d="M24 19.700l1.600.9v9.800l-1.600-.9z" fill="#cfd0e0"/>
<path d="M12.200 27.200l6.400 3.900M14.200 26.100l5.600 3.400M13.300 28.800l3.600-2.200" stroke="#dddeea" stroke-width="0.800" fill="none"/>
<rect x="18" y="6" width="10.600" height="15.700" rx="2" fill="#fff"/>
<path d="M19.300 9.600l3.200-.6v2.800h-3.200zM22.900 8.900l4-.8v3.700h-4zM19.300 12.200h3.200v2.800l-3.200-.6zM22.900 12.200h4v3.700l-4-.8z" fill="#2f9cf0"/>
<text x="23.400" y="20.700" style="font-family:'Liberation Sans',sans-serif" font-size="6.400" text-anchor="middle" fill="#2a2a33">10</text></g><g transform="translate(28 552.9)"><path d="M4.300 14.200L15.500 7.800l6 2.400v11.500L9.500 32l-5.200-3z" fill="#dfe0ec"/>
<path d="M4.300 14.200l5.200 3V32l-5.200-3z" fill="#d3d4e4"/>
<path d="M9.500 17.200l12-7V21.700L9.500 32z" fill="#e4e5ef"/>
<path d="M4.500 17.500l5 2.800 10-5.800M4.500 20.800l5 2.800 10-5.800M4.500 24.100l5 2.800 10-5.800M4.500 27.400l5 2.800 8-4.800" stroke="#b9bbd2" stroke-width="0.700" fill="none"/>
<circle cx="7.500" cy="28.300" r="0.600" fill="#222"/>
<rect x="15.500" y="6.300" width="11" height="11" rx="2" fill="#fff"/>
<rect x="12.800" y="16.700" width="16.300" height="6.900" rx="1.500" fill="#fff"/>
<path d="M17.200 9.600l3-.7v3.100h-3zM20.600 8.800l3.600-.8v4h-3.600zM17.200 12.400h3v3.100l-3-.6zM20.600 12.400h3.600v4l-3.600-.8z" fill="#2f9cf0"/>
<text x="21" y="22.700" style="font-family:'Liberation Sans',sans-serif" font-size="6.300" text-anchor="middle" fill="#2a2a33" textLength="14" lengthAdjust="spacingAndGlyphs">2019</text></g><g transform="translate(28 595.0)"><path d="M5.100 11.500L13 6.900l3 1.800v3.300l-5 3v9.300l-3.600 3.200-2.300-1.300z" fill="#d8d9e7"/>
<path d="M7.400 12.800v11.500l3.500-2.600v-9.700z" fill="#c9cadc"/>
<path d="M10.900 11.800L24 19.600v9.900L10.900 21.700z" fill="#767b9f"/>
<path d="M24 19.700l1.600.9v9.800l-1.600-.9z" fill="#cfd0e0"/>
<path d="M12.200 27.200l6.400 3.900M14.200 26.100l5.600 3.400M13.300 28.800l3.600-2.200" stroke="#dddeea" stroke-width="0.800" fill="none"/>
<rect x="18" y="6" width="10.600" height="15.700" rx="2" fill="#fff"/>
<path d="M19.300 9.600l3.200-.6v2.800h-3.200zM22.900 8.900l4-.8v3.700h-4zM19.300 12.200h3.200v2.800l-3.200-.6zM22.900 12.200h4v3.700l-4-.8z" fill="#2f9cf0"/>
<text x="23.400" y="20.700" style="font-family:'Liberation Sans',sans-serif" font-size="6.400" text-anchor="middle" fill="#2a2a33">10</text></g></svg>
<!--/PAGE-->
  </div>
  <div id="rpshadow"></div>
</div>

<div id="rpanel">
<div class="sec" style="left:13px;top:16.5px">EXPORT OPTIONS</div>
<div class="sec" style="left:30px;top:62.5px">CSV EXPORT OPTIONS</div>
<div class="sec" style="left:30px;top:100.5px">HTML EXPORT OPTIONS</div>
<div class="sec" style="left:30px;top:138.5px">IMAGE EXPORT OPTIONS</div>
<div class="sec" style="left:30px;top:176.5px">MHT EXPORT OPTIONS</div>
<div class="sec" style="left:30px;top:214.5px">PDF EXPORT OPTIONS</div>
<div class="sec" style="left:49px;top:626.5px">DOCUMENT OPTIONS</div>
<div class="sec" style="left:49px;top:664.5px">PDF PASSWORD SECURITY OPTIONS</div>
<div class="sec" style="left:30px;top:702.5px">RTF EXPORT OPTIONS</div>
<div class="sec" style="left:30px;top:740.5px">TEXT EXPORT OPTIONS</div>
<div class="lbl" style="top:245px;letter-spacing:-0.05px">Convert Images<span style="letter-spacing:-0.8px">...</span></div>
<div class="chk" style="top:241px"></div>
<div class="lbl" style="top:283px;letter-spacing:-0.03px">Show Print Dial<span style="letter-spacing:-0.8px">...</span></div>
<div class="chk" style="top:279px"></div>
<div class="lbl" style="top:321px;letter-spacing:-0.03px">Never Embedd<span style="letter-spacing:-0.8px">...</span></div>
<div class="inp" style="top:315px"></div>
<div class="lbl" style="top:359px;letter-spacing:0.04px">Export Editing F<span style="letter-spacing:-0.8px">...</span></div>
<div class="chk" style="top:355px"></div>
<div class="lbl" style="top:397px;letter-spacing:0.00px">Image Quality</div>
<div class="inp" style="top:391px">Highest</div>
<div class="lbl" style="top:435px;letter-spacing:-0.03px">PDF A Compati<span style="letter-spacing:-0.8px">...</span></div>
<div class="inp" style="top:429px">None</div>
<div class="lbl" style="top:473px;letter-spacing:-0.21px">PDF UA Compa<span style="letter-spacing:-0.8px">...</span></div>
<div class="inp" style="top:467px">None</div>
<div class="lbl" style="top:511px;letter-spacing:-0.39px">Page Range</div>
<div class="inp" style="top:505px"></div>
<div class="lbl" style="top:549px;letter-spacing:-0.17px">Rasterization R<span style="letter-spacing:-0.8px">...</span></div>
<div class="inp" style="top:543px">96</div>
<div class="lbl" style="top:587px;letter-spacing:-0.27px">Rasterize Images</div>
<div class="chk" style="top:583px"></div>
<svg class="abs" style="left:0;top:0" width="396" height="768" viewBox="0 0 396 768"><path d="M18.3 65.8v6l5.500-3zM18.3 103.8v6l5.500-3zM18.3 141.8v6l5.500-3zM18.3 179.8v6l5.500-3zM16.2 217.300h7l-3.500 5.900zM37.3 629.8v6l5.500-3zM37.3 667.8v6l5.500-3zM18.3 705.8v6l5.500-3zM18.3 743.8v6l5.500-3z" fill="#1e1756"/><path d="M362.79999999999995 401.9h8.400l-4.200 4.500zM362.79999999999995 439.9h8.400l-4.200 4.500zM362.79999999999995 477.9h8.400l-4.200 4.500zM363 552h8.200l-4.100-4.200zM363 559.8h8.200l-4.100 4.200z" fill="#1f1f28"/><path d="M165 252.3l4.700 4.700 9-9.200" fill="none" stroke="#3b6fc6" stroke-width="2"/></svg>
</div>

<div class="abs" style="left:1501px;top:99px;width:1px;height:768px;background:#f6f6f9"></div>
<div id="sidebar">
  <div class="act"></div>
  <svg class="abs" style="left:-1px;top:-1px" width="50" height="300" viewBox="0 0 50 300" fill="none" stroke="#b9c0d3">
    <path d="M15.900000000000091 16H34.09999999999991L26.90000000000009 24.200000000000003V33H23V24.200000000000003Z" stroke-width="1.800"/>
    <circle cx="24.9" cy="71.9" r="5.800" stroke-width="2.100" stroke="#b0b7cb"/>
    <path d="M31.20 71.90L34.70 71.90M29.35 76.35L31.83 78.83M24.90 78.20L24.90 81.70M20.45 76.35L17.97 78.83M18.60 71.90L15.10 71.90M20.45 67.45L17.97 64.97M24.90 65.60L24.90 62.10M29.35 67.45L31.83 64.97" stroke-width="3.700" stroke="#b0b7cb" stroke-linecap="butt"/>
    <circle cx="24.9" cy="71.9" r="2.100" fill="#b0b7cb" stroke="none"/>
    <circle cx="23" cy="118" r="7.100" stroke-width="2"/>
    <path d="M28.1 123.1L34.2 129.2" stroke-width="2.100" stroke-linecap="round"/>
  </svg>
</div>
</body>
</html>
